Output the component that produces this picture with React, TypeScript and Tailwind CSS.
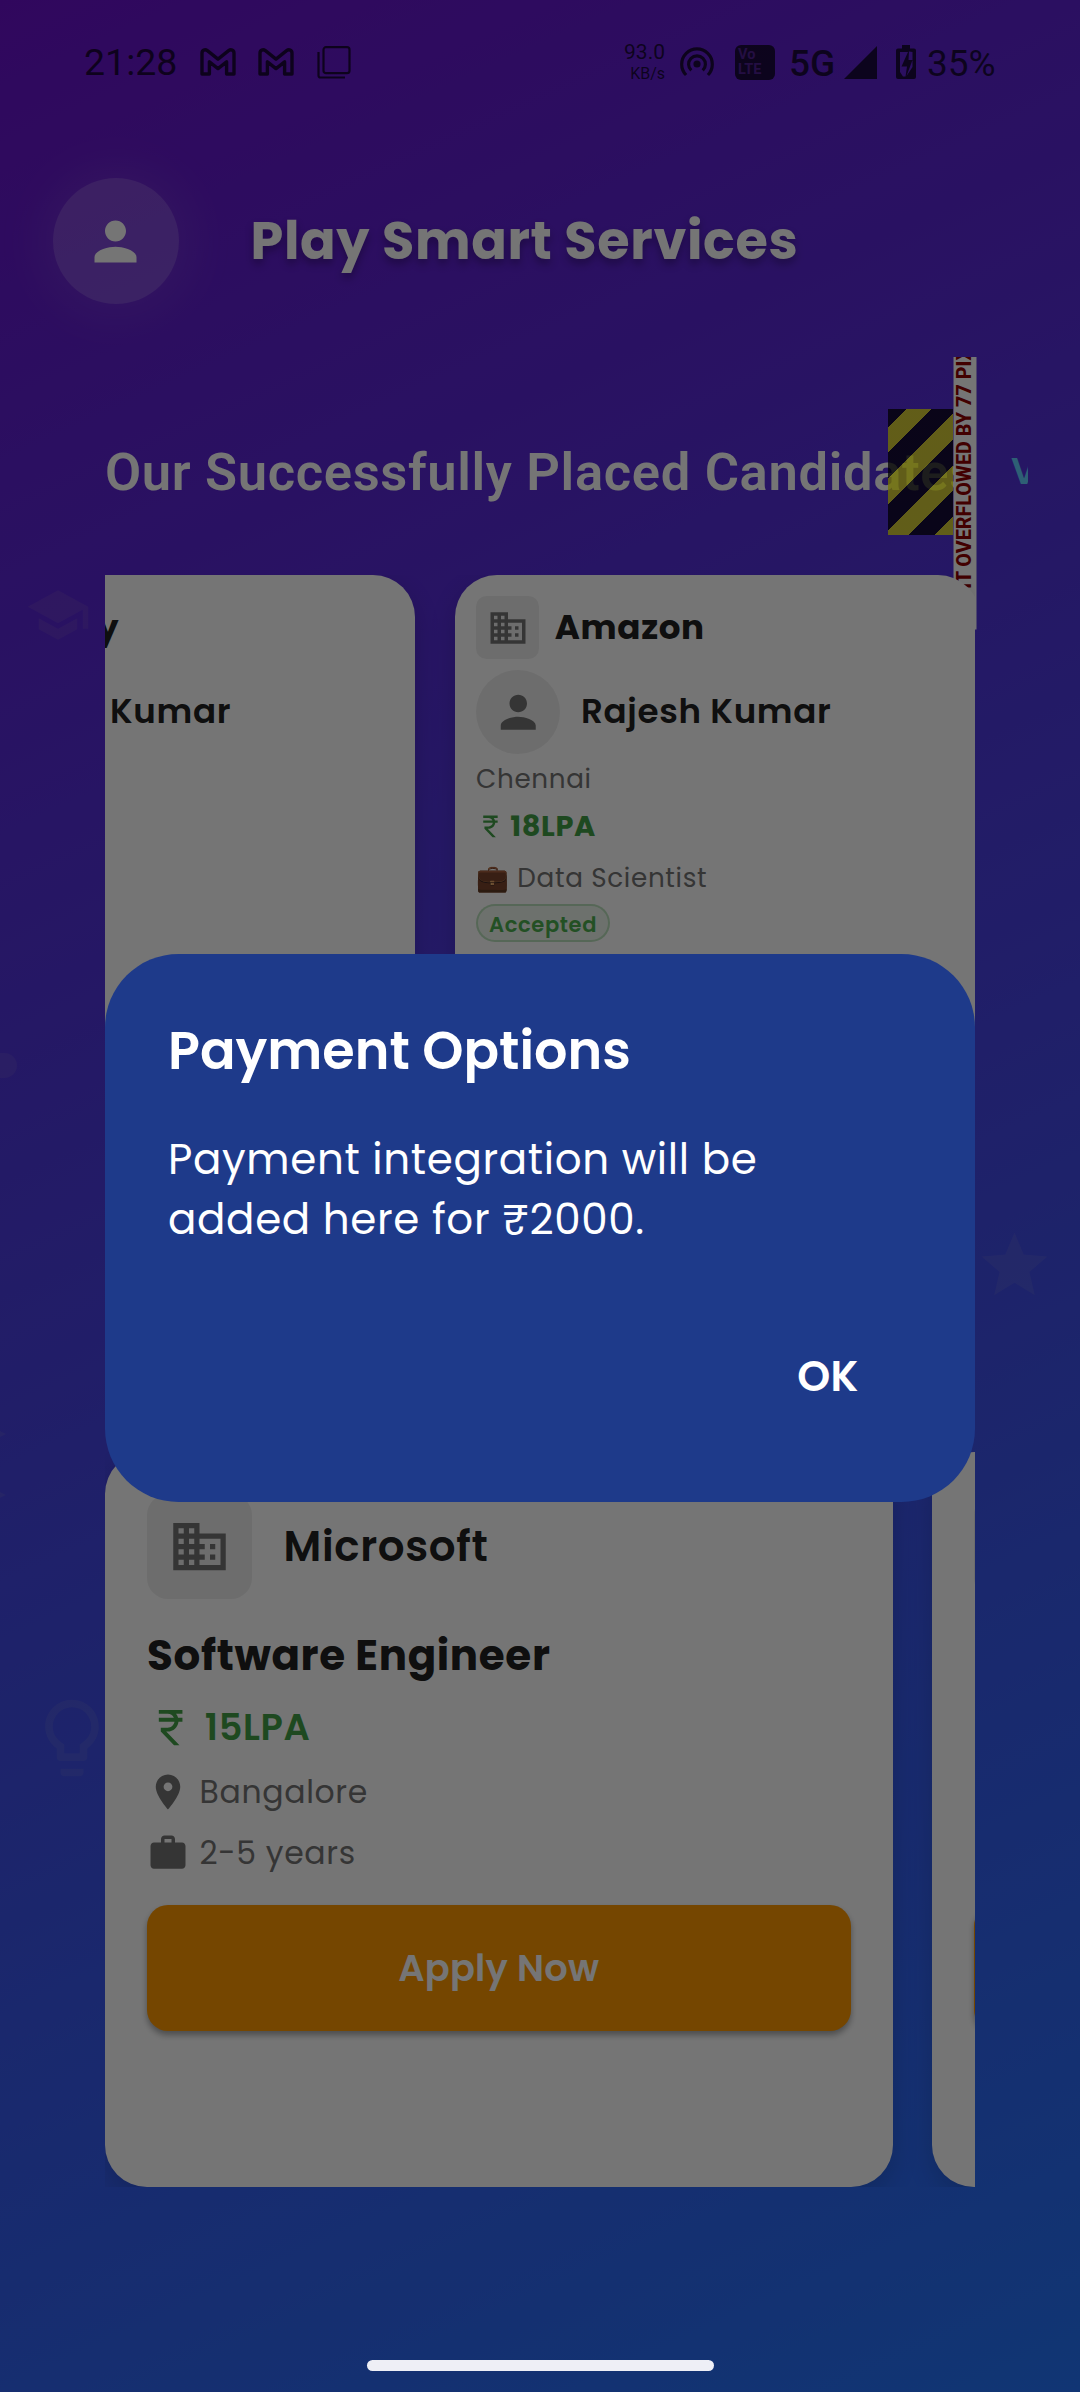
import type { ReactNode } from "react";
import {
  MdBusiness,
  MdCurrencyRupee,
  MdLightbulbOutline,
  MdLocationOn,
  MdPerson,
  MdSchool,
  MdStar,
  MdWork,
} from "react-icons/md";

function MailGlyph({ className }: { className: string }) {
  return (
    <svg viewBox="0 0 36 28" className={className} fill="none" stroke="currentColor" strokeWidth="3.4" strokeLinejoin="round">
      <path d="M2 26V5.200C2 2 5 .9 7.400 2.700L18 11.200L28.600 2.700C31 .9 34 2 34 5.200V26H26.600V13.800L18 20.600L9.400 13.800V26Z" />
    </svg>
  );
}

function StatusBar() {
  return (
    <div className="flex h-[124px] shrink-0 items-center pl-[84px] font-[Roboto,sans-serif] tracking-normal whitespace-nowrap text-black/70">
      <span className="w-[116px] text-[37.5px] leading-[44px]">21:28</span>
      <MailGlyph className="h-7 w-9" />
      <MailGlyph className="ml-[22px] h-7 w-9" />
      <svg viewBox="0 0 34 33" className="ml-[23px] h-[33px] w-[34px]" fill="none" stroke="currentColor" strokeWidth="2.2">
        <rect x="6.500" y="1.200" width="26" height="26" rx="2.500" />
        <path d="M1.500 6V29.500Q1.500 31.500 3.500 31.500H28" />
      </svg>
      <div className="ml-auto flex w-[45px] flex-col items-end gap-[3px]">
        <span className="text-[21px] leading-[21px]">93.0</span>
        <span className="text-[16px] leading-[16px]">KB/s</span>
      </div>
      <svg viewBox="0 0 34 30" className="ml-[15px] h-[30px] w-[34px]" fill="none" stroke="currentColor" strokeWidth="3.200">
        <path d="M6.100 28A15.300 15.300 0 1 1 27.900 28" />
        <path d="M11.300 23.400A8.400 8.400 0 1 1 22.700 23.400" />
        <circle cx="17" cy="17" r="3.600" fill="currentColor" stroke="none" />
      </svg>
      <div className="ml-[21px] flex h-[35px] w-10 flex-col justify-center rounded-md bg-black/70 pl-[3px] font-bold text-[#662bb8]/70">
        <span className="text-[14.5px] leading-[15px]">Vo</span>
        <span className="text-[14.5px] leading-[15px]">LTE</span>
      </div>
      <span className="ml-[14px] w-[46px] pt-1 text-[37px] leading-[44px] font-medium">5G</span>
      <svg viewBox="0 0 33 33" className="ml-[9px] size-[33px]" fill="currentColor">
        <path d="M33 0V33H0Z" />
      </svg>
      <svg viewBox="0 0 20 34" className="ml-[19px] h-[34px] w-5" fill="currentColor" fillRule="evenodd">
        <path d="M6 0H14V3.500H18Q20 3.500 20 5.500V32Q20 34 18 34H2Q0 34 0 32V5.500Q0 3.500 2 3.500H6ZM4 7V27L7 31.500H9.500L11 21.500H5.500L12 7ZM13 6.500L12.500 15H16.500L10.500 31L16.500 22V7Z" />
      </svg>
      <span className="mr-[84px] ml-[11px] w-[69px] pt-1 text-[37px] leading-[44px]">35%</span>
    </div>
  );
}

function BackgroundShapes() {
  return (
    <div className="absolute inset-0 overflow-hidden text-[#fff0b0]/7">
      <MdSchool className="absolute top-[582px] left-[25px] size-[66px]" />
      <div className="absolute top-[1053px] -left-5 h-[25px] w-[37px] rounded-full bg-[#fff0b0]/7" />
      <MdStar className="absolute top-[1226px] left-[975px] size-[79px]" />
      <svg viewBox="0 0 6 70" className="absolute top-[1430px] left-0 h-[70px] w-[6px]" fill="currentColor">
        <path d="M0 1L6 4L0 7ZM0 62L6 65L0 68Z" />
      </svg>
      <MdLightbulbOutline className="absolute top-[1692px] left-[26px] size-[92px]" />
    </div>
  );
}

function OverflowMarker() {
  return (
    <>
      <div className="absolute top-0 left-[783px] h-[126px] w-[65px] bg-[repeating-linear-gradient(135deg,rgba(0,0,0,0.75)_0px,rgba(0,0,0,0.75)_12.8px,rgba(255,255,0,0.75)_12.8px,rgba(255,255,0,0.75)_31px,rgba(0,0,0,0.75)_31px,rgba(0,0,0,0.75)_36.400px)]" />
      <div className="absolute top-[51px] left-[701.5px] h-[23px] w-[316px] -rotate-90 bg-white text-center font-[Roboto,sans-serif] text-[19.7px] leading-[22.500px] font-extrabold tracking-normal whitespace-nowrap text-[#900000]">
        RIGHT OVERFLOWED BY 77 PIXELS
      </div>
    </>
  );
}

function CandidateCard({ children }: { children: ReactNode }) {
  return (
    <div className="flex h-[560px] w-[525px] shrink-0 flex-col rounded-[42px] bg-white p-[21px] shadow-[0_10px_26px_rgba(0,0,0,0.15)]">
      {children}
    </div>
  );
}

function JobCard({ children }: { children: ReactNode }) {
  return (
    <div className="flex h-[734.5px] w-[787.5px] shrink-0 flex-col rounded-[42px] bg-white p-[42px] shadow-[0_10px_26px_rgba(0,0,0,0.15)]">
      {children}
    </div>
  );
}

const logoBox = "flex items-center justify-center bg-[#eeeeee] text-[#757575]";
const applyButton =
  "flex h-[126px] w-full shrink-0 items-center justify-center rounded-[21px] bg-[#ff9800] pt-px text-[36.750px] font-semibold tracking-[0.26px] text-white shadow-[0_4px_6px_rgba(0,0,0,0.35)]";

export default function App() {
  return (
    <div className="relative flex h-[2392px] w-[1080px] flex-col overflow-hidden bg-[linear-gradient(155.7deg,#6a11cb,#2575fc)] font-[Poppins,sans-serif] tracking-[0.656px]">
      <BackgroundShapes />
      <StatusBar />

      <header className="flex items-center pt-[54px] pl-[52.500px]">
        <div className="flex size-[126px] items-center justify-center rounded-full bg-white/20 shadow-[0_0_60px_rgba(255,240,220,0.14)]">
          <MdPerson className="size-[63px] text-white" />
        </div>
        <h1 className="ml-[72px] text-[52.5px] leading-[78px] font-bold whitespace-nowrap text-white [text-shadow:0_5px_8px_rgba(0,0,0,0.3)]">
          Play Smart Services
        </h1>
      </header>

      <main className="mx-[52.500px] mt-[52.500px] flex-1 overflow-hidden px-[52.500px] pt-[52.500px]">
        <div className="relative flex h-[126px] items-center whitespace-nowrap">
          <h2 className="w-[873.500px] shrink-0 font-[Roboto,sans-serif] text-[52.5px] leading-[62px] font-semibold text-white">
            Our Successfully Placed Candidates
          </h2>
          <span className="ml-[32.500px] text-[36.750px] font-semibold text-[#64d0ff]">View</span>
          <OverflowMarker />
        </div>

        <section className="relative mt-[40.400px] flex h-[525px] gap-[40px] overflow-hidden text-[#212121]">
          <div className="-ml-[215px] flex shrink-0">
            <CandidateCard>
              <div className="flex h-[63px] items-center pl-[186px] text-[34.125px] leading-[51px] font-bold">
                <span className="w-5 text-right">y</span>
              </div>
              <div className="mt-[10.500px] flex h-[84px] items-center pl-[199px] text-[34.125px] font-semibold">Kumar</div>
            </CandidateCard>
          </div>
          <CandidateCard>
            <div className="flex items-center">
              <div className={`${logoBox} size-[63px] rounded-[10.500px]`}>
                <MdBusiness className="size-[42px]" />
              </div>
              <span className="ml-[15.750px] text-[34.125px] leading-[51px] font-bold">Amazon</span>
            </div>
            <div className="mt-[10.500px] flex items-center">
              <div className={`${logoBox} size-[84px] rounded-full`}>
                <MdPerson className="size-[52.500px]" />
              </div>
              <span className="ml-[21px] text-[34.125px] leading-[51px] font-semibold">Rajesh Kumar</span>
            </div>
            <p className="mt-[5.250px] text-[26.25px] leading-[39.400px] text-[#757575]">Chennai</p>
            <div className="mt-[6.700px] flex items-center gap-[5.250px] text-[28.875px] leading-[43.300px] font-bold text-[#43a047]">
              <MdCurrencyRupee className="size-[28.900px]" />
              <span>18LPA</span>
            </div>
            <p className="mt-[9.300px] text-[26.25px] leading-[39.400px] text-[#757575]">💼 Data Scientist</p>
            <div className="mt-[6.500px] flex h-[38px] w-[134px] items-center self-start rounded-full border-[2.600px] border-[#4caf50]/30 bg-[#4caf50]/10 pt-[4px] pl-[11px] text-[21px] leading-[30px] font-semibold text-[#4caf50]">
              Accepted
            </div>
          </CandidateCard>
        </section>

        <section className="mt-[352px] flex h-[734.5px] gap-[39.400px] overflow-hidden">
          <JobCard>
            <div className="flex items-center">
              <div className={`${logoBox} size-[105px] rounded-[21px]`}>
                <MdBusiness className="size-[63px]" />
              </div>
              <span className="ml-[31.500px] text-[42px] leading-[63px] font-semibold text-[#212121]">Microsoft</span>
            </div>
            <h3 className="mt-[25px] text-[42px] leading-[63px] font-bold text-[#212121]">Software Engineer</h3>
            <div className="mt-[13px] flex items-center gap-[10.500px] text-[36.750px] leading-[55px] font-semibold text-[#43a047]">
              <MdCurrencyRupee className="size-[47.250px]" />
              <span>15LPA</span>
            </div>
            <div className="mt-[13.600px] flex items-center gap-[10.500px] text-[31.500px] leading-[47px] text-[#757575]">
              <MdLocationOn className="size-[42px]" />
              <span>Bangalore</span>
            </div>
            <div className="mt-[14px] flex items-center gap-[10.500px] text-[31.500px] leading-[47px] text-[#757575]">
              <MdWork className="size-[42px]" />
              <span>2-5 years</span>
            </div>
            <button className={`${applyButton} mt-[28.500px]`}>Apply Now</button>
          </JobCard>
          <JobCard>
            <div className={`${logoBox} size-[105px] rounded-[21px]`} />
            <div className={`${applyButton} mt-[306px]`} />
          </JobCard>
        </section>
      </main>

      <div className="absolute inset-0 flex items-center justify-center bg-black/54 pt-[63px]">
        <div role="dialog" className="flex h-[548px] w-[870px] flex-col rounded-[73.500px] bg-[#1e3a8a] px-[63px] pt-[62px] text-white">
          <h2 className="text-[52.5px] leading-[69px] font-semibold tracking-normal">Payment Options</h2>
          <p className="mt-[45px] text-[42px] leading-[60px]">
            Payment integration will be
            <br />
            added here for ₹2000.
          </p>
          <button className="mt-[106px] mr-[53.500px] self-end text-[42px] leading-[42px] font-semibold tracking-[0.26px]">OK</button>
        </div>
      </div>

      <div className="absolute bottom-[21px] left-[367px] h-[11px] w-[347px] rounded-full bg-[#eeeff6]" />
    </div>
  );
}
